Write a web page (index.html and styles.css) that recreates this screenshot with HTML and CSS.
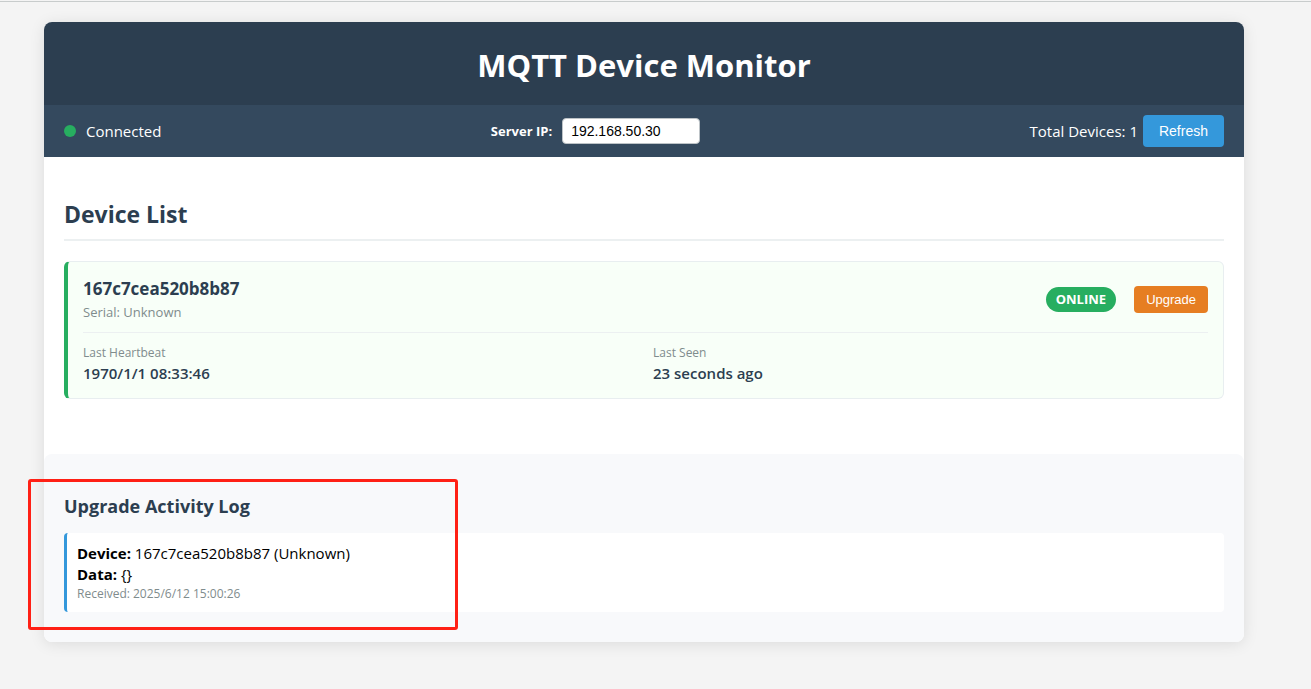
FILE: index.html
```html
<!DOCTYPE html>
<html lang="en">
<head>
<meta charset="utf-8">
<title>MQTT Device Monitor</title>
<link rel="stylesheet" href="styles.css">
</head>
<body>
<div class="container">
  <header class="header">
    <h1 class="title">MQTT Device Monitor</h1>
  </header>
  <div class="status-bar">
    <div class="connection"><span class="status-dot"></span><span>Connected</span></div>
    <div class="server">
      <label class="server-label" for="server-ip">Server IP:</label>
      <input class="server-input" id="server-ip" type="text" value="192.168.50.30">
    </div>
    <div class="totals">
      <span>Total Devices: <span>1</span></span>
      <button class="refresh" type="button">Refresh</button>
    </div>
  </div>
  <main class="devices">
    <h2 class="section-title">Device List</h2>
    <article class="device">
      <div class="device-header">
        <div>
          <h3 class="device-id">167c7cea520b8b87</h3>
          <div class="serial">Serial: Unknown</div>
        </div>
        <div class="device-actions">
          <span class="badge">ONLINE</span>
          <button class="upgrade" type="button">Upgrade</button>
        </div>
      </div>
      <div class="details">
        <div><div class="detail-label">Last Heartbeat</div><div class="detail-value">1970/1/1 08:33:46</div></div>
        <div><div class="detail-label">Last Seen</div><div class="detail-value">23 seconds ago</div></div>
      </div>
    </article>
  </main>
  <section class="log">
    <h3 class="log-title">Upgrade Activity Log</h3>
    <div class="log-entry">
      <div><strong>Device:</strong> 167c7cea520b8b87 (Unknown)</div>
      <div><strong>Data:</strong> {}</div>
      <div class="log-time">Received: 2025/6/12 15:00:26</div>
    </div>
    <div class="highlight"></div>
  </section>
</div>
</body>
</html>
```
FILE: styles.css
```css
* {
  box-sizing: border-box;
}

body {
  margin: 0;
  padding: 20px 43px 20px 20px;
  border-top: 1px solid #c8cccc;
  background: #f4f4f4;
  color: #000;
  font: 15px/21px "Open Sans", "Noto Sans", sans-serif;
}

html {
  padding-top: 1px;
  background: #f4f4f4;
}

h1, h2, h3 {
  margin: 0;
}

.container {
  max-width: 1200px;
  margin: 0 auto;
  border-radius: 8px;
  background: #fff;
  box-shadow: 0 2px 15px rgba(0, 0, 0, 0.1);
}

.header {
  padding: 22px 20px 18px;
  border-radius: 8px 8px 0 0;
  background: #2c3e50;
  color: #fff;
  text-align: center;
}

.title {
  font-size: 31px;
  line-height: 43px;
}

.status-bar {
  display: flex;
  justify-content: space-between;
  align-items: center;
  padding: 10px 20px;
  background: #34495e;
  color: #fff;
}

.connection {
  display: flex;
  align-items: center;
  gap: 10px;
}

.status-dot {
  width: 12px;
  height: 12px;
  border-radius: 50%;
  background: #27ae60;
}

.server {
  display: flex;
  align-items: center;
  gap: 10px;
}

.server-label {
  font-size: 13px;
  font-weight: 700;
}

.server-input {
  width: 138px;
  height: 26px;
  padding: 0 8px;
  border: 1px solid #bdc3c7;
  border-radius: 4px;
  background: #fff;
  color: #000;
  font: 14px "Liberation Sans", Arial, sans-serif;
}

.totals {
  display: flex;
  align-items: center;
  gap: 5px;
}

.refresh {
  height: 32px;
  padding: 0 16px;
  border: 0;
  border-radius: 4px;
  background: #3498db;
  color: #fff;
  font: 14px "Liberation Sans", Arial, sans-serif;
}

.devices {
  padding: 40px 20px 55px;
}

.section-title {
  margin-bottom: 20px;
  padding-bottom: 8px;
  border-bottom: 2px solid #ecf0f1;
  color: #2c3e50;
  font-size: 23px;
  line-height: 34px;
}

.device {
  padding: 14px 15px 15px;
  border: 1px solid #e8eef0;
  border-left: 4px solid #27ae60;
  border-radius: 6px;
  background: #f8fff8;
}

.device-header {
  display: flex;
  justify-content: space-between;
  align-items: center;
  padding-bottom: 9px;
  border-bottom: 1px solid #ecf0f1;
}

.device-id {
  color: #2c3e50;
  font-size: 17px;
  line-height: 26px;
}

.serial {
  color: #7f8c8d;
  font-size: 13px;
  line-height: 21px;
}

.device-actions {
  display: flex;
  align-items: center;
  gap: 18px;
}

.badge {
  padding: 2px 10px;
  border-radius: 20px;
  background: #27ae60;
  color: #fff;
  font-size: 13px;
  font-weight: 700;
}

.upgrade {
  height: 27px;
  padding: 0 12px;
  border: 0;
  border-radius: 4px;
  background: #e67e22;
  color: #fff;
  font: 13px "Liberation Sans", Arial, sans-serif;
}

.details {
  display: grid;
  grid-template-columns: 1fr 1fr;
  gap: 15px;
  padding-top: 10px;
}

.detail-label {
  color: #7f8c8d;
  font-size: 12px;
  line-height: 20px;
}

.detail-value {
  color: #2c3e50;
  font-weight: 600;
  line-height: 20px;
}

.log {
  position: relative;
  padding: 40px 20px 30px;
  border-radius: 8px;
  background: #f8f9fb;
}

.log-title {
  margin-bottom: 15px;
  color: #2c3e50;
  font-size: 18px;
  line-height: 24px;
}

.log-entry {
  padding: 10px;
  border-left: 3px solid #3498db;
  border-radius: 4px;
  background: #fff;
}

.log-time {
  color: #7f8c8d;
  font-size: 12px;
  line-height: 17px;
}

.highlight {
  position: absolute;
  top: 25px;
  left: -16px;
  width: 430px;
  height: 151px;
  border: 3px solid #ff2015;
  border-radius: 3px;
}
```
